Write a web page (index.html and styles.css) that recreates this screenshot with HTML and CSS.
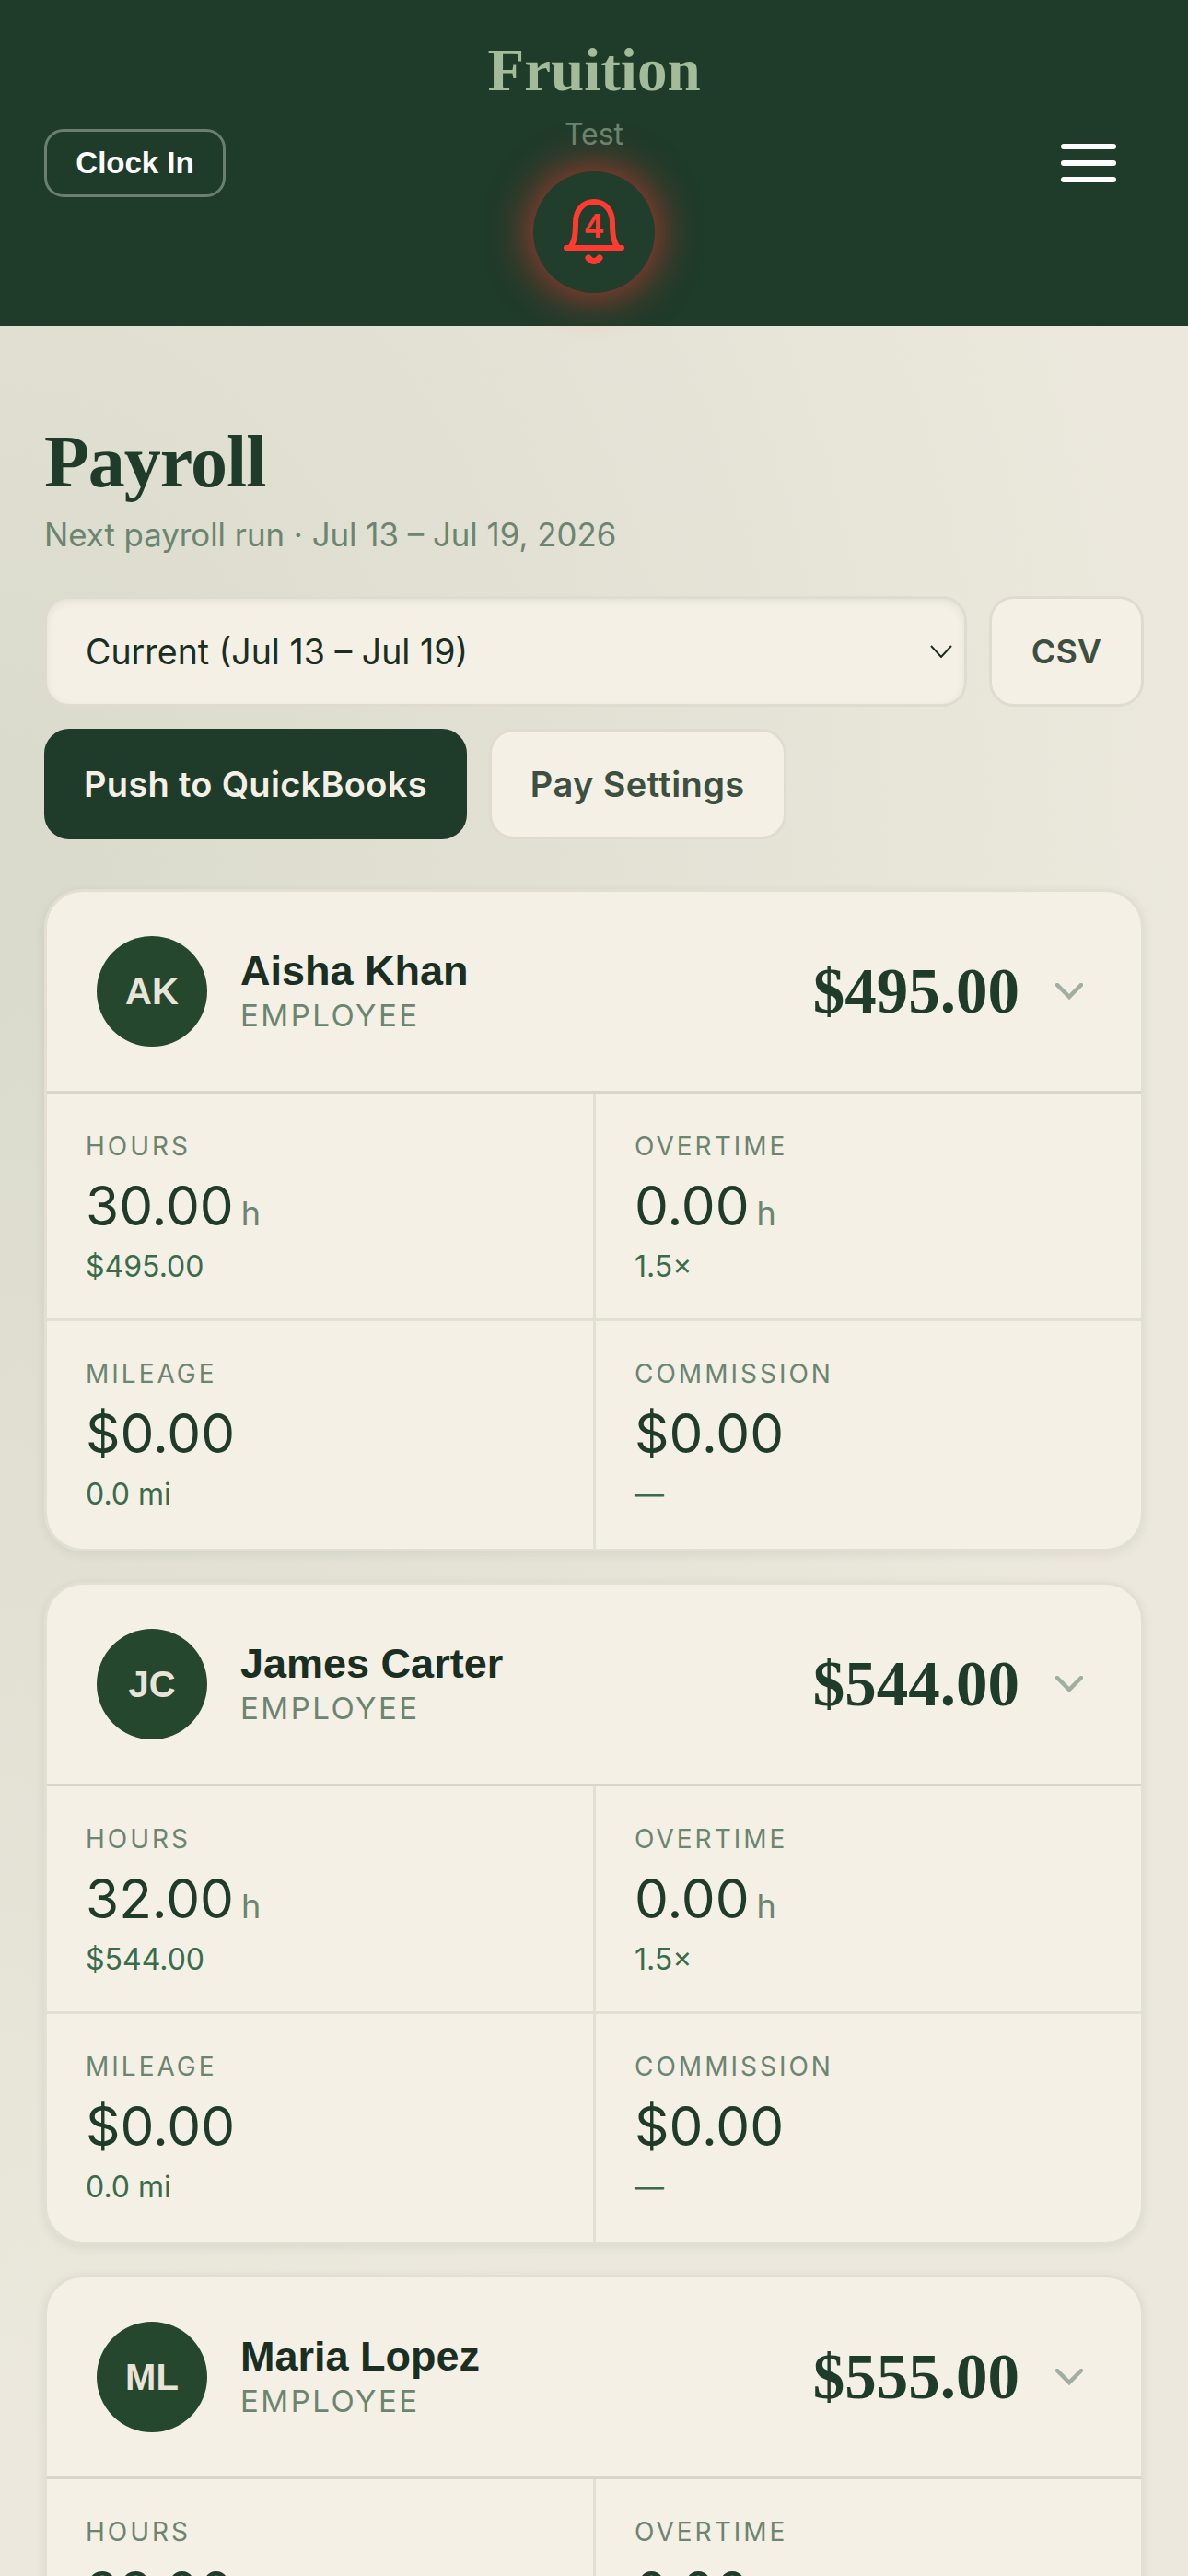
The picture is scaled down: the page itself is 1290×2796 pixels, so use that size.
FILE: index.html
```html
<!DOCTYPE html>
<html>
<head>
<meta charset="UTF-8">
<title>Payroll</title>
<link rel="stylesheet" href="styles.css">
</head>

<body>
<div class="top">
	<div class="side"><button class="clock">Clock In</button></div>
	<div class="brand">
		<div class="logo">Fruition</div>
		<div class="org">Test</div>
		<div class="bell">
			<svg width="66" height="72" viewBox="0 0 66 72">
				<path d="M3 53h60M7 53c4-6 6-11 6-27C13 11 22 3 33 3s20 8 20 23c0 16 2 21 6 27" fill="none" stroke="#ff3b30" stroke-width="6" stroke-linecap="round" stroke-linejoin="round"/>
				<path d="M27 64q6 7 12 0" fill="none" stroke="#ff3b30" stroke-width="7" stroke-linecap="round"/>
				<text x="33" y="42" text-anchor="middle" class="bell-num">4</text>
			</svg>
		</div>
	</div>
	<div class="side side-r"><div class="menu"><i></i><i></i><i></i></div></div>
</div>

<div class="page">
	<h1>Payroll</h1>
	<p class="sub">Next payroll run · Jul 13 – Jul 19, 2026</p>

	<div class="row">
		<div class="select">Current (Jul 13 – Jul 19)
			<svg width="24" height="14" viewBox="0 0 24 14"><path d="M1 1l11 12L23 1" fill="none" stroke="#1a2e22" stroke-width="2"/></svg>
		</div>
		<button class="btn btn-sm">CSV</button>
	</div>
	<div class="row">
		<button class="btn dark">Push to QuickBooks</button>
		<button class="btn btn-pay">Pay Settings</button>
	</div>

	<div class="card">
		<div class="card-head">
			<div class="avatar">AK</div>
			<div class="who"><div class="name">Aisha Khan</div><div class="role">EMPLOYEE</div></div>
			<div class="total">$495.00</div>
			<svg class="arrow" width="30" height="18" viewBox="0 0 30 18"><path d="M2 2l13 13L28 2" fill="none" stroke="#9fb0a2" stroke-width="4.5" stroke-linecap="round"/></svg>
		</div>
		<div class="grid">
			<div class="cell"><div class="lbl">HOURS</div><div class="val">30.00<span>h</span></div><div class="note">$495.00</div></div>
			<div class="cell"><div class="lbl">OVERTIME</div><div class="val">0.00<span>h</span></div><div class="note">1.5×</div></div>
			<div class="cell"><div class="lbl">MILEAGE</div><div class="val">$0.00</div><div class="note">0.0 mi</div></div>
			<div class="cell"><div class="lbl">COMMISSION</div><div class="val">$0.00</div><div class="note">—</div></div>
		</div>
	</div>

	<div class="card">
		<div class="card-head">
			<div class="avatar">JC</div>
			<div class="who"><div class="name">James Carter</div><div class="role">EMPLOYEE</div></div>
			<div class="total">$544.00</div>
			<svg class="arrow" width="30" height="18" viewBox="0 0 30 18"><path d="M2 2l13 13L28 2" fill="none" stroke="#9fb0a2" stroke-width="4.5" stroke-linecap="round"/></svg>
		</div>
		<div class="grid">
			<div class="cell"><div class="lbl">HOURS</div><div class="val">32.00<span>h</span></div><div class="note">$544.00</div></div>
			<div class="cell"><div class="lbl">OVERTIME</div><div class="val">0.00<span>h</span></div><div class="note">1.5×</div></div>
			<div class="cell"><div class="lbl">MILEAGE</div><div class="val">$0.00</div><div class="note">0.0 mi</div></div>
			<div class="cell"><div class="lbl">COMMISSION</div><div class="val">$0.00</div><div class="note">—</div></div>
		</div>
	</div>

	<div class="card">
		<div class="card-head">
			<div class="avatar">ML</div>
			<div class="who"><div class="name">Maria Lopez</div><div class="role">EMPLOYEE</div></div>
			<div class="total">$555.00</div>
			<svg class="arrow" width="30" height="18" viewBox="0 0 30 18"><path d="M2 2l13 13L28 2" fill="none" stroke="#9fb0a2" stroke-width="4.5" stroke-linecap="round"/></svg>
		</div>
		<div class="grid">
			<div class="cell"><div class="lbl">HOURS</div><div class="val">33.00<span>h</span></div><div class="note">$555.00</div></div>
			<div class="cell"><div class="lbl">OVERTIME</div><div class="val">0.00<span>h</span></div><div class="note">1.5×</div></div>
		</div>
	</div>
</div>
</body>
</html>
```

FILE: styles.css
```css
*{ margin:0; padding:0; box-sizing:border-box; }
html,body{ height:2796px; overflow:hidden; }
body{ background:radial-gradient(ellipse 1300px 1700px at 0% 34%,#d9dacc 0%,rgba(217,218,204,0) 100%),#ece8dd; font-family:Inter,"Liberation Sans",sans-serif; color:#1a2e22; }
button{ font-family:inherit; }

.top{ height:354px; background:#1f3b2a; display:grid; grid-template-columns:1fr auto 1fr; padding:0 48px; }
.clock{ margin-top:140px; width:197px; height:74px; border:3px solid #6b7f6f; border-radius:21px; background:none; color:#fff; font:bold 33px "Liberation Sans",sans-serif; }
.side-r{ display:flex; justify-content:flex-end; }
.brand{ display:flex; flex-direction:column; align-items:center; padding-top:38px; }
.logo{ font:bold 65px/76px "Liberation Serif",serif; color:#a3bb98; }
.org{ font-size:32px; line-height:44px; color:#6b8570; margin-top:10px; }
.bell{ width:132px; height:132px; margin-top:18px; border-radius:50%; background:#213d2b; box-shadow:0 0 48px rgba(255,59,48,.75); display:flex; align-items:center; justify-content:center; }
.bell-num{ font:bold 36px "Liberation Sans",sans-serif; fill:#ff3b30; }
.menu{ margin:156px 30px 0 0; width:60px; display:flex; flex-direction:column; gap:12px; }
.menu i{ display:block; height:6px; background:#fff; border-radius:3px; }

.page{ padding:101px 48px 0; }
h1{ font:bold 80px/92px "Liberation Serif",serif; letter-spacing:-1px; color:#1f3b2a; }
.sub{ font-size:34.8px; line-height:46px; color:#6b8570; margin-top:10px; }

.row{ display:flex; gap:24px; margin-bottom:24px; }
.row:first-of-type{ margin-top:44px; }
.select{ flex:1; height:120px; display:flex; align-items:center; justify-content:space-between; padding:0 13px 0 42px; background:#f4f0e6; border:3px solid #e0dbd0; border-radius:27px; font-size:37.5px; color:#1a2e22; box-shadow:inset 0 3px 9px rgba(30,50,35,.08); }
.btn{ height:120px; padding:0 40px; background:#f4f0e6; border:3px solid #e0dbd0; border-radius:27px; font-size:38px; letter-spacing:.3px; font-weight:600; color:#3d4f40; }
.btn-sm{ font-size:36px; letter-spacing:0; padding:0 43px; }
.btn-pay{ padding:0 42px; letter-spacing:.4px; }
.dark{ background:#1f3b2a; border-color:#1f3b2a; color:#f4f0e6; }

.card{ background:#f4f0e6; border:3px solid #e2dfd3; border-radius:42px; margin-top:33px; box-shadow:0 3px 12px rgba(30,50,35,.08); overflow:hidden; }
.row + .card{ margin-top:54px; }
.card-head{ height:219px; display:flex; align-items:center; padding:0 63px 0 54px; border-bottom:3px solid #d9d6c9; }
.avatar{ width:120px; height:120px; border-radius:50%; background:#24472e; color:#e8e4d8; font:bold 40px "Liberation Sans",sans-serif; display:flex; align-items:center; justify-content:center; }
.who{ flex:1; margin-left:36px; }
.name{ font:bold 45px/52px "Liberation Sans",sans-serif; color:#1a2e22; }
.role{ font-size:33px; line-height:44px; letter-spacing:2.5px; color:#6b8570; }
.total{ font:bold 69px "Liberation Serif",serif; color:#1f3b2a; margin-right:39px; }

.grid{ display:grid; grid-template-columns:596px 1fr; }
.cell{ height:247px; padding:38px 42px 0; border-bottom:3px solid #e2dfd3; }
.cell:nth-child(odd){ border-right:3px solid #e2dfd3; }
.cell:nth-child(n+3){ border-bottom:0; }
.lbl{ font-size:28px; line-height:38px; letter-spacing:3px; color:#6b8570; }
.val{ font-size:58.5px; line-height:72px; height:72px; margin-top:10px; color:#1f3b2a; }
.val span{ font-size:36px; color:#6b8570; margin-left:8px; }
.note{ font-size:32px; line-height:42px; margin-top:9px; color:#3a6b4a; }
```
